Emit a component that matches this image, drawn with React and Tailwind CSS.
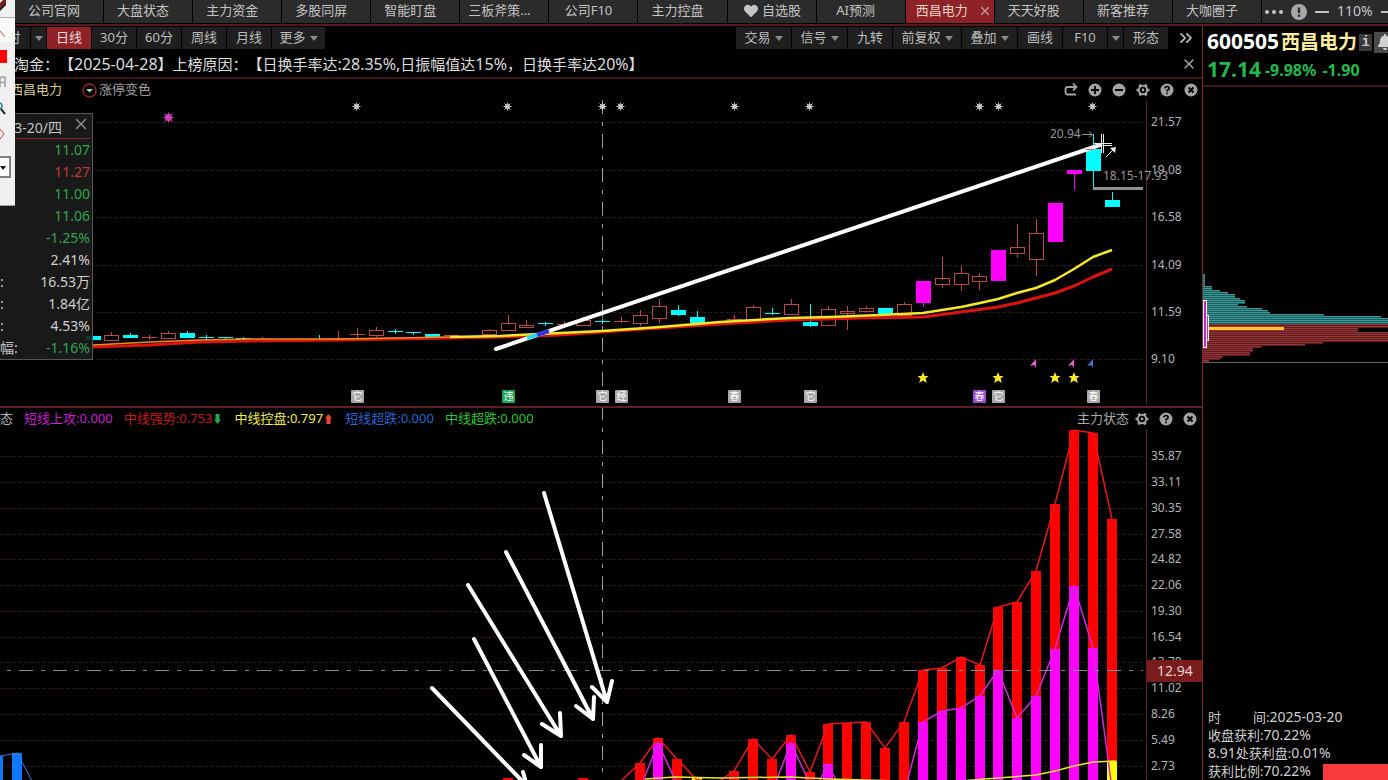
import React from 'react';
import { FiX, FiChevronsRight } from 'react-icons/fi';
import { FaHeart, FaBell } from 'react-icons/fa';

const tabs = [
  { name: '公司官网' },
  { name: '大盘状态' },
  { name: '主力资金' },
  { name: '多股同屏' },
  { name: '智能盯盘' },
  { name: '三板斧策...' },
  { name: '公司F10' },
  { name: '主力控盘' },
  { name: '自选股', heart: true },
  { name: 'AI预测' },
  { name: '西昌电力', active: true },
  { name: '天天好股' },
  { name: '新客推荐' },
  { name: '大咖圈子' },
];

const quote = [
  { value: '11.07', color: 'text-[#2fa84f]' },
  { value: '11.27', color: 'text-[#c03a3a]' },
  { value: '11.00', color: 'text-[#2fa84f]' },
  { value: '11.06', color: 'text-[#2fa84f]' },
  { value: '-1.25%', color: 'text-[#2fa84f]' },
  { value: '2.41%', color: 'text-[#d0d0d0]' },
  { label: ':', value: '16.53万', color: 'text-[#d0d0d0]' },
  { label: ':', value: '1.84亿', color: 'text-[#d0d0d0]' },
  { label: ':', value: '4.53%', color: 'text-[#d0d0d0]' },
  { label: '幅:', value: '-1.16%', color: 'text-[#2fa84f]' },
];

// x, kind (r = hollow, c = cyan, m = limit up), body top, body bottom, high, low
const candles = [
  [93, 'c', 336, 340, 336, 340],
  [111, 'r', 335, 341, 332, 341],
  [130, 'c', 335, 338, 333, 338],
  [149, 'r', 337, 338, 335, 340],
  [168, 'r', 333, 339, 331, 339],
  [187, 'c', 333, 338, 331, 338],
  [206, 'c', 337, 338, 335, 340],
  [225, 'c', 337, 338, 337, 340],
  [243, 'c', 338, 339, 337, 340],
  [262, 'r', 339, 340, 337, 340],
  [319, 'c', 339, 340, 335, 341],
  [338, 'r', 338, 339, 331, 339],
  [357, 'r', 334, 335, 328, 338],
  [376, 'r', 330, 336, 327, 337],
  [395, 'c', 331, 332, 329, 334],
  [413, 'c', 332, 333, 332, 335],
  [432, 'c', 334, 337, 334, 337],
  [451, 'r', 335, 336, 335, 336],
  [489, 'r', 330, 335, 329, 335],
  [508, 'r', 323, 331, 315, 331],
  [526, 'r', 325, 328, 320, 328],
  [545, 'c', 323, 324, 322, 326],
  [564, 'r', 324, 325, 321, 327],
  [583, 'r', 320, 326, 317, 326],
  [602, 'c', 321, 322, 319, 324],
  [621, 'r', 321, 322, 317, 323],
  [640, 'r', 315, 324, 310, 326],
  [659, 'r', 306, 319, 299, 323],
  [678, 'c', 310, 315, 305, 316],
  [697, 'c', 317, 323, 311, 323],
  [715, 'r', 322, 323, 321, 323],
  [734, 'r', 319, 322, 315, 322],
  [753, 'r', 307, 321, 305, 321],
  [772, 'c', 313, 314, 308, 315],
  [791, 'r', 304, 315, 299, 315],
  [810, 'c', 322, 326, 304, 327],
  [828, 'r', 309, 326, 306, 326],
  [847, 'r', 311, 314, 306, 330],
  [866, 'r', 308, 312, 306, 312],
  [885, 'c', 308, 315, 308, 315],
  [904, 'r', 304, 316, 302, 316],
  [923, 'm', 281, 303, 281, 307],
  [942, 'r', 278, 285, 257, 288],
  [961, 'r', 273, 285, 266, 291],
  [979, 'r', 276, 282, 273, 290],
  [998, 'm', 250, 281, 250, 281],
  [1017, 'r', 247, 254, 224, 258],
  [1036, 'r', 233, 260, 219, 276],
  [1055, 'm', 203, 242, 203, 242],
  [1074, 'm', 170, 174, 170, 190],
  [1093, 'c', 149, 171, 134, 188],
  [1112, 'c', 200, 207, 192, 207],
];

const candleColors = { r: '#b84b45', c: '#00ffff', m: '#ff00ff' };

const priceTicks = [
  [122, '21.57'],
  [170, '19.08'],
  [217, '16.58'],
  [265, '14.09'],
  [312, '11.59'],
  [359, '9.10'],
];

const stateTicks = [
  [456, '35.87'],
  [482, '33.11'],
  [508, '30.35'],
  [534, '27.58'],
  [559, '24.82'],
  [585, '22.06'],
  [611, '19.30'],
  [637, '16.54'],
  [662, '13.78'],
  [688, '11.02'],
  [714, '8.26'],
  [740, '5.49'],
  [766, '2.73'],
];

// x, top of the red bar, top of the magenta bar
const bars = [
  [508, 778],
  [583, 778],
  [640, 763],
  [658, 738, 743],
  [677, 759],
  [696, 779],
  [734, 771],
  [753, 739],
  [772, 759],
  [791, 735, 743],
  [810, 772],
  [828, 724, 764],
  [847, 723],
  [866, 722],
  [885, 748],
  [904, 722],
  [923, 670, 722],
  [942, 668, 711],
  [961, 657, 708],
  [980, 665, 696],
  [998, 607, 670],
  [1017, 602, 718],
  [1036, 571, 696],
  [1055, 504, 649],
  [1074, 430, 586],
  [1093, 433, 648],
  [1112, 519],
];

const notices = [
  [357, '它', '#a8a8a8'],
  [508, '违', '#1fa556'],
  [602, '它', '#a8a8a8'],
  [621, '经', '#a8a8a8'],
  [734, '春', '#a8a8a8'],
  [810, '它', '#a8a8a8'],
  [979, '春', '#9b4fd0'],
  [998, '它', '#a8a8a8'],
  [1093, '春', '#a8a8a8'],
];

const arrows = [
  'M544 493L607 702M592 687L607 702L612 681',
  'M506 552L593 719M576 706L593 719L594 697',
  'M468 585L561 736M542 724L561 736L560 713',
  'M474 639L541 767M524 755L541 767L541 745',
  'M432 688L527 786M523 772L527 786',
];

const chipsUpper = [2, 2, 2, 2, 2, 2, 9, 9, 17, 25, 32, 32, 37, 42, 42, 35, 44, 59, 65, 67, 121, 178, 186, 186, 186];
const chipsLower = [186, 186, 155, 155, 186, 186, 186, 186, 186, 120, 102, 58, 50, 50, 47, 47, 20, 17, 6];

const Caret = () => (
  <svg viewBox="0 0 8 5" className="h-[5px] w-2 shrink-0" fill="#8a8a8a">
    <path d="M0 0h8L4 5z" />
  </svg>
);

const ToolButton = ({ label, caret, active, className = '' }) => (
  <button
    aria-label={label || '展开'}
    className={`flex h-[22px] items-center justify-center gap-1 whitespace-nowrap ${
      active ? 'bg-[#8f2226] text-[#e8dcdc]' : 'bg-[#1f1f1f] text-[#bdbdbd]'
    } ${className}`}
  >
    {label}
    {caret && <Caret />}
  </button>
);

const PaneIcon = ({ kind }) => (
  <svg viewBox="0 0 14 14" className="size-3.5" fill="none" stroke="#a3a3a3" strokeWidth="2">
    {kind === 'redo' && <path d="M12 4H3.500Q1.500 4 1.500 6.500V9Q1.500 11.500 3.500 11.500H12M9 0.500L12.500 4L9 7.500" strokeWidth="1.800" />}
    {kind === 'gear' && (
      <>
        <path d="M3.500 1.500L5 4M10.500 1.500L9 4M0.500 7H3M13.500 7H11M3.500 12.500L5 10M10.500 12.500L9 10" strokeWidth="2.600" />
        <circle cx="7" cy="7" r="4.200" />
        <circle cx="7" cy="7" r="1.400" fill="#a3a3a3" stroke="none" />
      </>
    )}
    {['plus', 'minus', 'help', 'close'].includes(kind) && <circle cx="7" cy="7" r="6.500" fill="#a3a3a3" stroke="none" />}
    {kind === 'plus' && <path d="M7 3v8M3 7h8" stroke="#000" />}
    {kind === 'minus' && <path d="M3 7h8" stroke="#000" />}
    {kind === 'close' && <path d="M4.500 4.500l5 5M9.500 4.500l-5 5" stroke="#000" />}
    {kind === 'help' && <path d="M4.800 5.500Q5 3.500 7 3.500T9.200 5.500Q9.200 6.500 7 7.500V8.500M7 9.500V11.200" stroke="#000" strokeWidth="1.600" />}
  </svg>
);

const PaneTools = ({ kinds }) => (
  <div className="flex items-center gap-2.5">
    {kinds.map((kind) => (
      <button key={kind} aria-label={kind}>
        <PaneIcon kind={kind} />
      </button>
    ))}
  </div>
);

const TopBar = () => (
  <header className="flex h-[26px] border-b-2 border-[#541c1e] pb-px text-[13px]">
    <nav className="grid min-w-0 flex-1 grid-cols-14 gap-px pl-[15px]">
      {tabs.map((tab) => (
        <button
          key={tab.name}
          className={`flex items-center justify-center gap-1 overflow-hidden whitespace-nowrap pb-0.5 ${
            tab.active ? 'bg-[#8f2226] pl-2 text-[#e6d6c8]' : 'bg-[#2b2b2b] pr-2.5 text-[#c4c4c4]'
          }`}
        >
          {tab.heart && <FaHeart className="ml-3 text-sm" />}
          {tab.name}
          {tab.active && <FiX className="ml-1.5 text-sm text-[#c9a0a0]" />}
        </button>
      ))}
    </nav>
    <div className="ml-px flex w-[126px] shrink-0 items-center gap-2 overflow-hidden bg-[#2b2b2b] pl-[3px] text-[#c4c4c4]">
      <button aria-label="更多菜单">
        <svg viewBox="0 0 18 4" className="h-1 w-[18px]" fill="#c4c4c4">
          <circle cx="2" cy="2" r="2" />
          <circle cx="9" cy="2" r="2" />
          <circle cx="16" cy="2" r="2" />
        </svg>
      </button>
      <button aria-label="提示">
        <svg viewBox="0 0 16 16" className="size-4">
          <circle cx="8" cy="8" r="8" fill="#a8a8a8" />
          <path d="M8 3.500v5.500M8 10.500v2.200" stroke="#2b2b2b" strokeWidth="2.400" />
        </svg>
      </button>
      <button aria-label="缩小" className="h-0.5 w-3.5 shrink-0 bg-[#c4c4c4]" />
      <span className="pb-0.5 text-sm">110%</span>
      <button aria-label="放大" className="h-0.5 w-3.5 shrink-0 bg-[#c4c4c4]" />
    </div>
  </header>
);

const Toolbar = () => (
  <div className="flex h-[25px] items-start justify-between pt-px text-[13px]">
    <div className="flex gap-px">
      <ToolButton label="时" className="w-[30px] pr-0.5" />
      <ToolButton caret className="w-[15px]" />
      <ToolButton label="日线" active className="w-11" />
      <ToolButton label="30分" className="w-11" />
      <ToolButton label="60分" className="w-11" />
      <ToolButton label="周线" className="w-11" />
      <ToolButton label="月线" className="w-11" />
      <ToolButton label="更多" caret className="w-[53px]" />
    </div>
    <div className="flex gap-px">
      <ToolButton label="交易" caret className="w-[55px]" />
      <ToolButton label="信号" caret className="w-[55px]" />
      <ToolButton label="九转" className="w-11" />
      <ToolButton label="前复权" caret className="w-[68px]" />
      <ToolButton label="叠加" caret className="w-[55px]" />
      <ToolButton label="画线" className="w-11" />
      <ToolButton label="F10" className="w-11" />
      <ToolButton caret className="w-[15px]" />
      <ToolButton label="形态" className="w-11" />
      <button aria-label="更多工具" className="flex h-[22px] w-[33px] items-center justify-center text-[#c4c4c4]">
        <FiChevronsRight className="text-xl" />
      </button>
    </div>
  </div>
);

const Num = ({ children }) => <span className="text-base">{children}</span>;

const NewsLine = () => (
  <div className="flex h-7 items-center justify-between border-b-2 border-[#3d1618] pr-[5px] pl-3.5 text-[15px] whitespace-nowrap text-[#dedede] [text-spacing-trim:space-all]">
    <p>
      淘金：【<Num>2025-04-28</Num>】上榜原因：【日换手率达<Num>:28.35%,</Num>日振幅值达<Num>15%</Num>，日换手率达<Num>20%</Num>】
    </p>
    <button aria-label="关闭">
      <FiX className="text-base text-[#a8a8a8]" />
    </button>
  </div>
);

const Burst = ({ x, y, r, color }) => (
  <g stroke={color} fill={color}>
    <circle cx={x} cy={y} r={r - 1.5} stroke="none" />
    <path d={`M${x - r} ${y}h${r * 2}M${x} ${y - r}v${r * 2}M${x - r + 1} ${y - r + 1}l${r * 2 - 2} ${r * 2 - 2}M${x + r - 1} ${y - r + 1}l${2 - r * 2} ${r * 2 - 2}`} />
  </g>
);

const Grid = ({ ticks }) => (
  <>
    {ticks.map(([y, label]) => (
      <g key={label}>
        <path d={`M0 ${y + 0.5}H1143`} stroke="#2e1816" strokeDasharray="4 2" />
        <text x="1151" y={y + 4} fontSize="12" fill="#b4b4b4">{label}</text>
      </g>
    ))}
  </>
);

const PriceChart = () => (
  <svg viewBox="0 79 1202 327" className="col-start-1 row-start-1 block h-auto w-full">
    <Grid ticks={priceTicks} />
    <path d="M1146.500 101V405" stroke="#5e2424" />
    {candles.map(([x, kind, top, bottom, high, low]) => (
      <g key={x} stroke={candleColors[kind]} fill={kind === 'r' ? '#000' : candleColors[kind]}>
        <path d={`M${x + 0.5} ${high}V${low}`} />
        {bottom - top > 1 ? (
          <rect x={x - 6.5} y={top + 0.5} width="14" height={bottom - top - 1} />
        ) : (
          <path d={`M${x - 7} ${top + 0.5}h15`} />
        )}
      </g>
    ))}
    <polyline
      points="93,347 150,345 200,342 250,341 340,340 450,338 500,337 560,335 602,332 660,328 720,324 790,320 860,318 923,317 961,312 998,307 1017,303 1036,298 1055,293 1074,286 1093,277 1112,269"
      fill="none" stroke="#d91410" strokeWidth="3" strokeLinejoin="round"
    />
    <polyline
      points="93,345 150,342 200,340 250,339 340,339 450,337"
      fill="none" stroke="#f08a20" strokeWidth="1.500"
    />
    <polyline
      points="450,337 500,336 560,333 602,331 660,327 720,322 790,318 830,317 880,315 923,313 961,307 980,303 998,299 1017,293 1036,288 1055,280 1074,269 1093,257 1112,250"
      fill="none" stroke="#f5e72a" strokeWidth="2.500" strokeLinejoin="round"
    />
    <path d="M602.500 100V406" stroke="#9aa0a4" strokeDasharray="14 8 4 8" />
    <path d="M496 349L1100 145" stroke="#fff" strokeWidth="4" strokeLinecap="round" />
    <path d="M527 338L537 335" stroke="#28d7f0" strokeWidth="4" />
    <path d="M537 335L549 331" stroke="#2a35e0" strokeWidth="4" />
    <path d="M1086 149.500H1094" stroke="#e05050" />
    <path d="M1093 188.500H1143" stroke="#8f8f8f" strokeWidth="3" />
    <g stroke="#e8e8e8">
      <path d="M1101.500 134V153M1103.500 134V153M1094 143.500H1112M1094 145.500H1112" />
      <path d="M1106 157L1114 149" />
    </g>
    <path d="M1110 148L1116 147L1115 153Z" fill="#e8e8e8" />
    <g fontSize="12" fill="#989898">
      <text x="1050" y="138">20.94</text>
      <text x="1103" y="180">18.15-17.93</text>
      <path d="M1082 134.500H1092M1089 131.500L1092 134.500L1089 137.500" stroke="#989898" fill="none" />
    </g>
    <Burst x={168.5} y={117.5} r={5} color="#d040b8" />
    {[356.5, 507.5, 602.5, 620.5, 734.5, 809.5, 979.5, 998.5, 1092.5].map((x) => (
      <Burst key={x} x={x} y={106.5} r={4} color="#c8c8c8" />
    ))}
    {[923, 998, 1055, 1074].map((x) => (
      <path key={x} d={`M${x} 372l1.600 4h4l-3 2.600l1.200 4.400l-3.800 -2.600l-3.800 2.600l1.200 -4.400l-3 -2.600h4z`} fill="#ffe92e" />
    ))}
    {[[1036, '#e85ad0'], [1074, '#e85ad0'], [1093, '#4a6fd8']].map(([x, color]) => (
      <path key={x} d={`M${x} 359V368L${x - 2} 365L${x - 6} 366Z`} fill={color} />
    ))}
    {notices.map(([x, label, color]) => (
      <g key={x}>
        <rect x={x - 6} y="390" width="13" height="13" rx="1" fill={color} />
        <text x={x + 0.5} y="400" fontSize="10" textAnchor="middle" fill="#fff">{label}</text>
      </g>
    ))}
  </svg>
);

const StateChart = () => (
  <svg viewBox="0 408 1202 372" preserveAspectRatio="xMinYMin slice" className="col-start-1 row-start-1 block size-full">
    <Grid ticks={stateTicks} />
    <path d="M1146.500 429V780" stroke="#5e2424" />
    <g fill="#0f78ff">
      <rect x="0" y="756" width="3" height="24" />
      <rect x="12" y="753" width="10" height="27" />
      <path d="M0 756L18 753L22 762L32 781" fill="none" stroke="#2f7ae0" />
    </g>
    {bars.map(([x, red, magenta]) => (
      <g key={x}>
        <rect x={x - 5} y={red} width="10" height={780 - red} fill="#ff0000" />
        {magenta && <rect x={x - 5} y={magenta} width="10" height={780 - magenta} fill="#ff00ff" />}
      </g>
    ))}
    <rect x="1107" y="761" width="10" height="19" fill="#ffff00" />
    <rect x="692" y="778" width="10" height="2" fill="#ffff00" />
    <g fill="none" strokeWidth="1.500">
      <polyline
        points="621,781 640,763 658,738 677,759 696,779 715,784 734,771 753,739 772,759 791,735 810,772 828,724 847,723 866,722 885,748 904,722 923,670 942,668 961,657 980,665 998,607 1017,602 1036,571 1055,504 1074,430 1093,433 1112,519"
        stroke="#e81818"
      />
      <polyline points="642,784 658,743 677,784" stroke="#d028d8" />
      <polyline
        points="775,784 791,743 810,784 818,784 828,764 838,784 906,786 923,722 942,711 961,708 980,696 998,670 1017,718 1036,696 1055,649 1074,586 1093,648 1111,781"
        stroke="#d028d8"
      />
      <polyline
        points="645,779 675,777 720,778 790,777 830,779 900,781 960,781 998,778 1036,775 1055,771 1074,766 1093,762 1116,761"
        stroke="#f5e72a"
      />
    </g>
    <path d="M602.500 406V780" stroke="#9aa0a4" strokeDasharray="14 8 4 8" />
    <path d="M-15 670.500H1143" stroke="#858c94" strokeDasharray="14 8 4 8" />
    <rect x="1147" y="660" width="55" height="22" fill="#7a1c1c" />
    <text x="1157" y="676" fontSize="14" fill="#e0d0d0">12.94</text>
    {arrows.map((d) => (
      <path key={d} d={d} fill="none" stroke="#fff" strokeWidth="4" strokeLinecap="round" strokeLinejoin="round" />
    ))}
  </svg>
);

const Trend = ({ up }) => (
  <svg viewBox="0 0 7 10" className={`mx-0.5 h-2.5 w-[7px] ${up ? '' : 'rotate-180'}`} fill={up ? '#f04438' : '#25a84a'}>
    <path d="M3.500 0L7 4.500H5.500V10H1.500V4.500H0z" />
  </svg>
);

const PricePane = () => (
  <section className="grid border-b-2 border-[#5e2022]">
    <PriceChart />
    <div className="col-start-1 row-start-1 flex h-[22px] items-center justify-between self-start pr-1 pl-2.5 text-[13px]">
      <div className="flex items-center">
        <span className="text-[#d8cd8e]">西昌电力</span>
        <button className="ml-5 flex items-center gap-0.5 text-[#a0a0a0]">
          <svg viewBox="0 0 15 15" className="size-[15px]">
            <circle cx="7.500" cy="7.500" r="6.500" fill="none" stroke="#a02828" strokeWidth="1.300" />
            <path d="M4 6h7L7.500 9.500z" fill="#c4c4c4" />
          </svg>
          涨停变色
        </button>
      </div>
      <PaneTools kinds={['redo', 'plus', 'minus', 'gear', 'help', 'close']} />
    </div>
  </section>
);

const StatePane = () => (
  <section className="grid min-h-0 flex-1">
    <StateChart />
    <div className="col-start-1 row-start-1 flex h-[22px] items-center justify-between self-start pr-[5px] text-[13px] whitespace-nowrap">
      <div className="flex items-center gap-[11px]">
        <span className="text-[#b4b4b4]">态</span>
        <span className="text-[#c81fd0]">短线上攻:0.000</span>
        <span className="flex items-center text-[#c01c18]">中线强势:0.753<Trend /></span>
        <span className="flex items-center text-[#f0ee4a]">中线控盘:0.797<Trend up /></span>
        <span className="text-[#2a66d0]">短线超跌:0.000</span>
        <span className="text-[#2fc832]">中线超跌:0.000</span>
      </div>
      <div className="flex items-center gap-1.5 text-[#a8a8a8]">
        主力状态
        <PaneTools kinds={['gear', 'help', 'close']} />
      </div>
    </div>
  </section>
);

const ChipChart = () => (
  <svg viewBox="0 272 185 92" preserveAspectRatio="xMinYMin slice" className="block w-full">
    {chipsUpper.map((width, i) => (
      <g key={i}>
        <rect y={274 + i * 2} width={width} height="2" fill="#1f5a5c" />
        <rect y={274 + i * 2} width={width} height="1" fill="#3a9a9a" />
      </g>
    ))}
    {chipsLower.map((width, i) => (
      <g key={i}>
        <rect y={324 + i * 2} width={width} height="2" fill="#5a1e20" />
        <rect y={324 + i * 2} width={width} height="1" fill="#9a3436" />
      </g>
    ))}
    <path d="M0 362.500H186" stroke="#6a6a6a" />
    <path d="M6 328.500H81" stroke="#ffc42e" strokeWidth="3" />
    <g fill="#b828c8" stroke="#fff">
      <rect x="0.500" y="300.500" width="3" height="47" />
      <rect x="3.500" y="315.500" width="2" height="25" />
    </g>
  </svg>
);

const SidePanel = () => (
  <aside className="flex w-[186px] shrink-0 flex-col overflow-hidden border-l border-[#7a2a2c]">
    <div className="h-[61px] border-b-2 border-[#3d1618] pl-1 font-bold">
      <div className="flex h-8 items-center whitespace-nowrap">
        <span className="text-[21px] text-white">600505</span>
        <span className="ml-0.5 text-[19px] text-[#ffeea0]">西昌电力</span>
        <button className="ml-0.5 flex h-[17px] w-[13px] shrink-0 items-center justify-center bg-[#3a3a3a] font-mono text-sm text-[#c4c4c4]">i</button>
        <button aria-label="预警" className="ml-0.5 flex h-[21px] w-[21px] shrink-0 items-center justify-center bg-[#4a4a4a] text-[#d0d0d0]">
          <FaBell className="text-base" />
        </button>
      </div>
      <div className="flex h-6 items-center gap-1 text-base whitespace-nowrap text-[#22b84c]">
        <span className="text-[21px]">17.14</span>
        <span>-9.98%</span>
        <span className="ml-0.5">-1.90</span>
      </div>
    </div>
    <div className="pt-[185px]">
      <ChipChart />
    </div>
    <div className="mt-auto pl-[5px] text-[13px] leading-[18px] whitespace-nowrap text-[#cfcfcf]">
      <p className="flex gap-8">
        <span>时</span>
        <span>间:<span className="text-sm leading-[18px]">2025-03-20</span></span>
      </p>
      <p>收盘获利:<span className="text-sm leading-[18px]">70.22%</span></p>
      <p><span className="text-sm leading-[18px]">8.91</span>处获利盘:<span className="text-sm leading-[18px]">0.01%</span></p>
      <div className="flex items-end gap-3">
        <p>获利比例:<span className="text-sm leading-[18px]">70.22%</span></p>
        <div className="h-4 flex-1 bg-[#f83a3c]" />
      </div>
    </div>
  </aside>
);

const QuotePopup = () => (
  <div className="absolute top-[113px] left-0 w-[93px] border-y border-r border-[#555] bg-[#1c1c1c]/90 pr-0.5 text-sm">
    <div className="flex h-[25px] items-end justify-end gap-2.5 border-b border-[#8a2428] whitespace-nowrap text-[#c4c4c4]">
      <span>03-20/四</span>
      <button aria-label="关闭行情" className="self-center pb-1">
        <FiX className="text-lg text-[#8a8a8a]" />
      </button>
    </div>
    <dl>
      {quote.map((row, idx) => (
        <div key={idx} className="flex h-[22px] items-center justify-between">
          <dt className="text-[#c4c4c4]">{row.label}</dt>
          <dd className={row.color}>{row.value}</dd>
        </div>
      ))}
    </dl>
  </div>
);

const DrawPalette = () => (
  <div className="absolute top-0 left-0 flex h-[206px] w-[15px] flex-col border-b border-[#a0a0a0] bg-[#f0f0f0]">
    <button aria-label="橡皮" className="h-[18px] border-b border-[#b0b0b0]">
      <svg viewBox="0 0 15 17" className="h-[17px] w-[15px]">
        <path d="M0 3L3 0H6V4L0 10Z" fill="#7a2020" />
        <path d="M0 9L6 3V5L0 11Z" fill="#101010" />
      </svg>
    </button>
    <button aria-label="直线" className="h-6 bg-[#fafafa]">
      <svg viewBox="0 0 15 24" className="h-6 w-[15px]" fill="none" stroke="#d04040">
        <path d="M0 13L5 19" />
      </svg>
    </button>
    <button aria-label="颜色" className="h-[28px]">
      <svg viewBox="0 0 15 28" className="h-7 w-[15px]">
        <rect y="8" width="7" height="13" fill="#ff0000" />
      </svg>
    </button>
    <button aria-label="文字" className="h-6 overflow-hidden">
      <svg viewBox="0 0 15 24" className="h-6 w-[15px]" fill="none" stroke="#a0a0a0" strokeWidth="1.500">
        <path d="M0 17V9Q0 7 2 7H5V17M0 12.500H5" />
      </svg>
    </button>
    <button aria-label="放大镜" className="h-[26px]">
      <svg viewBox="0 0 15 26" className="h-[26px] w-[15px]" fill="none">
        <path d="M0 9Q2.500 10 2 13L0 15" stroke="#208080" strokeWidth="1.500" />
        <path d="M1 15L5 20" stroke="#101010" strokeWidth="2" />
      </svg>
    </button>
    <button aria-label="菱形" className="h-7">
      <svg viewBox="0 0 15 28" className="h-7 w-[15px]" fill="none" stroke="#d04040">
        <path d="M0 9L4 14L0 19" />
      </svg>
    </button>
    <button aria-label="线宽" className="mt-2 h-[22px] w-[11px] border-2 border-l-0 border-[#808080] bg-white">
      <svg viewBox="0 0 9 18" className="h-[18px] w-[9px]">
        <path d="M0 8H6L3 12Z" fill="#101010" />
      </svg>
    </button>
  </div>
);

const App = () => (
  <div className="relative flex h-screen flex-col overflow-hidden bg-black font-['Noto_Sans','Noto_Sans_CJK_SC',sans-serif]">
    <TopBar />
    <div className="flex min-h-0 flex-1">
      <main className="flex min-w-0 flex-1 flex-col">
        <Toolbar />
        <NewsLine />
        <PricePane />
        <StatePane />
      </main>
      <SidePanel />
    </div>
    <QuotePopup />
    <DrawPalette />
  </div>
);

export default App;
